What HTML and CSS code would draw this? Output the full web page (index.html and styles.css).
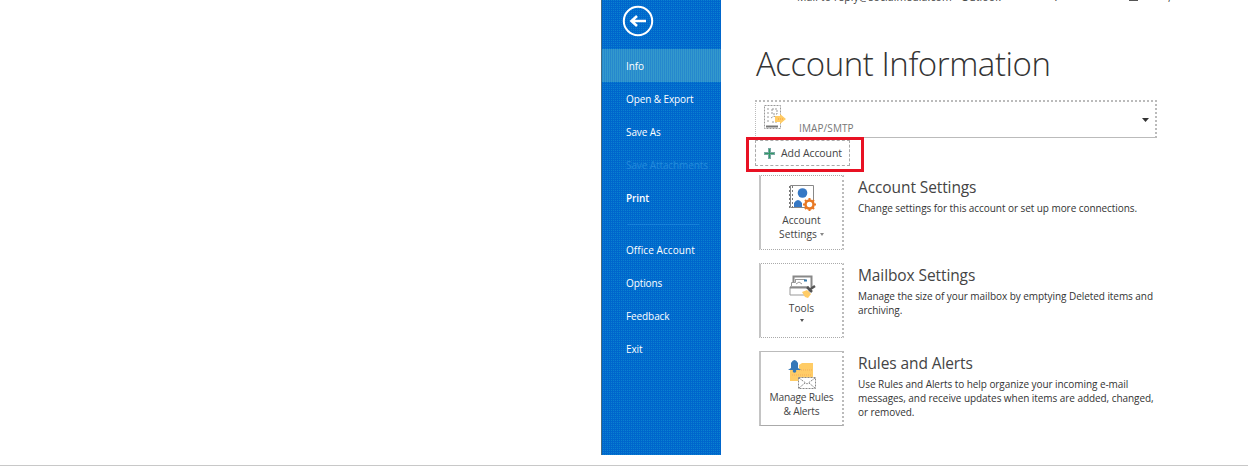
FILE: index.html
```html
<!DOCTYPE html>
<html lang="en">
<head>
<meta charset="utf-8">
<title>Account Information</title>
<link rel="stylesheet" href="styles.css">
</head>
<body>
<div class="window">
  <nav class="sidebar">
    <div class="back">
      <svg width="32" height="32" viewBox="0 0 32 32" fill="none" stroke="#fff"><circle cx="16" cy="16" r="14.2" stroke-width="2"/><path d="M24 16H10M15 11l-5.500 5 5.500 5" stroke-width="2.600"/></svg>
    </div>
    <a class="item active"><span>Info</span></a>
    <a class="item"><span>Open &amp; Export</span></a>
    <a class="item"><span>Save As</span></a>
    <a class="item disabled"><span>Save Attachments</span></a>
    <a class="item strong"><span>Print</span></a>
    <div class="separator"></div>
    <a class="item wide"><span>Office Account</span></a>
    <a class="item"><span>Options</span></a>
    <a class="item"><span>Feedback</span></a>
    <a class="item"><span>Exit</span></a>
  </nav>
  <main class="content">
    <div class="titlebar"><span class="caption">Mail to reply@socialmedia.com - Outlook</span><span class="help">?</span><span class="mark"></span><span class="help">,</span></div>
    <h1 class="title">Account Information</h1>
    <div class="account">
      <svg width="26" height="27" viewBox="0 0 26 27" fill="none"><path d="M2.500 1.500h16v23h-16z" stroke="#999" stroke-dasharray="2 1"/><path d="M5 5h3M5 9h2M5 13h3M5 17h2M10 5h5v5h-5zM9 14l3-2 4 3M10 18h5" stroke="#999" stroke-dasharray="2 1"/><path d="M4 22.500h12" stroke="#777" stroke-width="2"/><path d="M13 12h5v-2l6 5-6 5v-2h-5z" fill="#fc6"/><path d="M16 15h6" stroke="#f93" stroke-dasharray="1 1"/></svg>
      <span class="protocol">IMAP/SMTP</span>
      <svg class="caret" width="7" height="4" viewBox="0 0 7 4"><path d="M0 0h7L3.500 4z" fill="#333"/></svg>
    </div>
    <div class="highlight">
      <div class="add"><svg width="11" height="11" viewBox="0 0 11 11"><path d="M4 0h3v4h4v3H7v4H4V7H0V4h4z" fill="#7aa8a4"/><path d="M5 1h1v9H5zM1 5h9v1H1z" fill="#339966"/></svg><span>Add Account</span></div>
    </div>
    <section class="row">
      <div class="tile">
        <svg class="icon" width="30" height="28" viewBox="0 0 30 28" fill="none"><path d="M3.500 1.500h23v22h-23z" stroke="#888"/><path d="M2.500 2v22M5.500 2v22" stroke="#777" stroke-dasharray="2 2"/><circle cx="15.500" cy="9" r="4.800" fill="#3678c4"/><path d="M7 23v-4q4-6 8 0v4z" fill="#3678c4"/><circle cx="22.500" cy="20.500" r="4" stroke="#e87824" stroke-width="2.500" fill="#fff"/><path d="M22.500 14v3M22.500 24v3M16 20.500h3M26 20.500h3M18 16l2 2M25 23l2 2M27 16l-2 2M20 23l-2 2" stroke="#e87824" stroke-width="2"/></svg>
        <span>Account</span><span>Settings<i class="drop"></i></span>
      </div>
      <div class="text"><h2>Account Settings</h2><p>Change settings for this account or set up more connections.</p></div>
    </section>
    <section class="row">
      <div class="tile tools">
        <svg class="icon" width="30" height="26" viewBox="0 0 30 26" fill="none"><path d="M6.500 9V2.500h18V13" stroke="#888" stroke-width="2"/><path d="M8.500 5.500h10M4.500 12V8.500h4V5M3 13h19v8H3z" stroke="#999"/><path d="M3 13.500h19" stroke="#888" stroke-width="2"/><path d="M9 10l3-2 3 2" stroke="#999"/><path d="M17 6.500h3" stroke="#3678a8" stroke-width="2"/><path d="M15 18l5-2 4 4-3 4-3-1z" fill="#fc6"/><path d="M20 13l5 5M22 16l6-4" stroke="#555" stroke-width="2.500"/></svg>
        <span>Tools</span><i class="drop dark"></i>
      </div>
      <div class="text"><h2>Mailbox Settings</h2><p>Manage the size of your mailbox by emptying Deleted items and</p><p>archiving.</p></div>
    </section>
    <section class="row">
      <div class="tile rules">
        <svg class="icon" width="30" height="31" viewBox="0 0 30 31" fill="none"><path d="M12 6l3-2h11v18H3V11h9z" fill="#fc6"/><path d="M12 11h13M5 16h20" stroke="#f4ad58" stroke-dasharray="1 1"/><path d="M1 11l3-2V4q3.500-6 7 0v5l3 2z" fill="#3678b8"/><circle cx="7.500" cy="12" r="1.800" fill="#3678b8"/><path d="M11.500 18.500h17v11h-17z" fill="#fff" stroke="#888" stroke-dasharray="2 1"/><path d="M12 19l8 6 8-6M12 29l6-5M28 29l-6-5" stroke="#888" stroke-dasharray="2 1"/></svg>
        <span>Manage Rules</span><span>&amp; Alerts</span>
      </div>
      <div class="text"><h2>Rules and Alerts</h2><p>Use Rules and Alerts to help organize your incoming e-mail</p><p>messages, and receive updates when items are added, changed,</p><p>or removed.</p></div>
    </section>
  </main>
</div>
</body>
</html>
```
FILE: styles.css
```css
* { box-sizing: border-box; }
body { margin: 0; background: #fff; font: 10.5px/14px "Open Sans", "Noto Sans", sans-serif; color: #444; }
.window { display: flex; height: 466px; padding-left: 601px; border-bottom: 1px solid #c8c8c8; overflow: hidden; }
.sidebar { width: 120px; height: 455px; flex: none; border-left: 1px solid #456c80; background: conic-gradient(#0a82cf 0 25%, #0066cc 0) 0 0 / 2px 2px; color: #fff; }
.back { height: 49px; padding: 5px 0 0 20px; }
.back svg { display: block; }
.item { display: flex; align-items: center; height: 33px; padding: 1px 0 0 24px; white-space: nowrap; font-size: 10px; letter-spacing: -0.1px; }
.wide { letter-spacing: 0.08px; }
.active { background: conic-gradient(#3399cc 0 50%, #2688cd 0) 0 0 / 2px 2px; }
.disabled { color: #2389dc; }
.strong { font-weight: 600; }
.separator { height: 19px; margin: 0 22px 0 25px; background: linear-gradient(#1683d8, #1683d8) 0 10px / 100% 1px no-repeat; }
.content { width: 527px; padding-left: 34px; }
.titlebar { display: flex; height: 4px; overflow: hidden; padding-left: 42px; line-height: 14px; }
.titlebar > * { margin-top: -10px; height: 14px; flex: none; }
.titlebar .caption { width: 257px; white-space: nowrap; letter-spacing: 0.1px; }
.titlebar .help { width: 75px; }
.titlebar .mark { width: 9px; height: 1px; margin: 0 30px 0 0; background: #555; }
.titlebar .help + .mark { margin-top: 0; }
.title { width: max-content; margin: 39px 0 0 1px; height: 57px; font: 300 33px/42px "Open Sans", sans-serif; letter-spacing: -0.45px; color: #333; white-space: nowrap; }
.account { display: flex; width: 402px; height: 38px; border: 1px solid #bbb; border-top: 2px dotted #bbb; border-right: 2px dotted #bbb; border-left-style: dotted; padding: 2px 6px 0 6px; }
.protocol { margin: 17px 0 0 11px; line-height: 14px; color: #777; font-size: 10px; letter-spacing: 0.1px; white-space: nowrap; }
.caret { margin: 14px 0 0 auto; }
.highlight { width: 118px; height: 35px; margin: -1px 0 0 -9px; border: 3px solid #e81123; padding: 0 0 0 6px; }
.add { display: flex; align-items: center; width: 95px; height: 26px; border: 1px dashed #aaa; padding-left: 8px; gap: 6px; white-space: nowrap; letter-spacing: -0.08px; }
.row { display: flex; height: 75px; margin: 3px 0 0 4px; }
.row + .row { margin-top: 13px; }
.tile { display: flex; flex-direction: column; align-items: center; width: 85px; height: 75px; flex: none; border: 1px dotted #aaa; border-left: 2px solid #c4c4c4; border-right: 2px dotted #bbb; padding-top: 8px; font-size: 10.2px; line-height: 14px; white-space: nowrap; }
.tile .icon { flex: none; margin-bottom: 1px; }
.tools { padding-top: 10px; }
.rules { padding-top: 7px; border-top: 1px solid #bbb; border-bottom: 1px solid #aaa; letter-spacing: -0.2px; }
.rules .icon { margin-bottom: 0; }
.drop { display: inline-block; width: 0; border: 2.5px solid transparent; border-top: 3px solid #888; border-bottom: 0; margin: 0 0 2px 3px; }
.drop.dark { margin: 4px 0 0; border-top-color: #555; }
.text { padding: 2px 0 0 14px; }
.text h2 { margin: 0 0 4px; width: max-content; font: 400 15.5px/20px "Open Sans", sans-serif; letter-spacing: -0.1px; color: #444; white-space: nowrap; }
.text p { margin: 0; width: max-content; line-height: 14px; font-size: 10px; letter-spacing: -0.06px; white-space: nowrap; color: #333; }
```
